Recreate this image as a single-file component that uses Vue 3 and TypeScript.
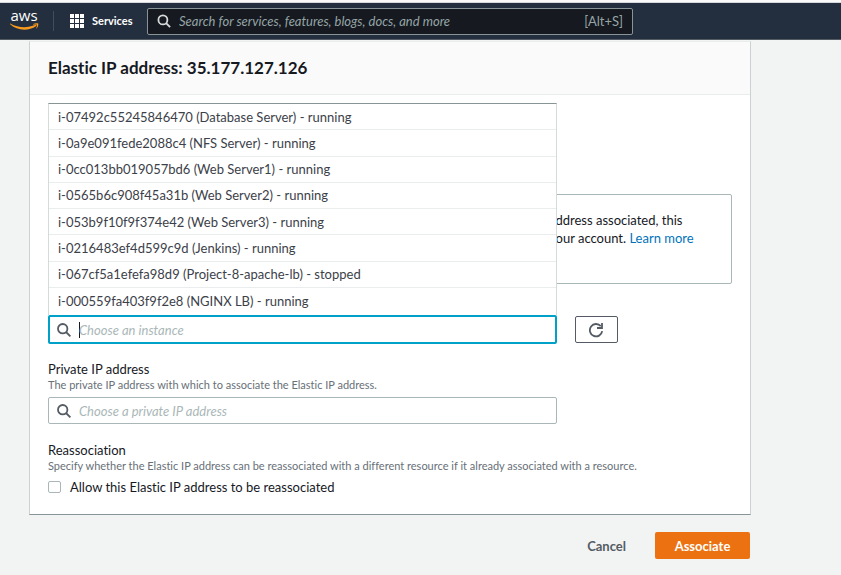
<script setup lang="ts">
import { ref } from 'vue'

interface Instance {
  id: string
  name: string
  state: 'running' | 'stopped'
}

const address = '35.177.127.126'

const instances: Instance[] = [
  { id: 'i-07492c55245846470', name: 'Database Server', state: 'running' },
  { id: 'i-0a9e091fede2088c4', name: 'NFS Server', state: 'running' },
  { id: 'i-0cc013bb019057bd6', name: 'Web Server1', state: 'running' },
  { id: 'i-0565b6c908f45a31b', name: 'Web Server2', state: 'running' },
  { id: 'i-053b9f10f9f374e42', name: 'Web Server3', state: 'running' },
  { id: 'i-0216483ef4d599c9d', name: 'Jenkins', state: 'running' },
  { id: 'i-067cf5a1efefa98d9', name: 'Project-8-apache-lb', state: 'stopped' },
  { id: 'i-000559fa403f9f2e8', name: 'NGINX LB', state: 'running' },
]

const search = ref('')
const instance = ref('')
const privateIp = ref('')
const allowReassociation = ref(false)

function choose(item: Instance) {
  instance.value = item.id
}
</script>

<template>
  <div class="page">
    <header class="nav">
      <a class="logo" href="#">
        <svg viewBox="0 -4 30 30" width="30" height="30" aria-hidden="true">
          <text x="14" y="11" text-anchor="middle" class="logo-text">aws</text>
          <path d="M.3 13.5c8 4.6 17 5 25.2 1.3.9-.3 1.4.5.7 1.1C18.5 21.3 7.5 21 .1 14.2c-.3-.4-.1-.8.2-.7z" fill="#f79a1e" />
          <path d="M23.2 14.1c1.7-1.1 4.6-1.1 5-.5.4.6-.1 3.5-1.6 4.9-.3.2-.5.1-.4-.2.5-1.2 1-2.9.7-3.4-.4-.5-2.3-.3-3.5-.2-.3 0-.4-.3-.2-.6z" fill="#f79a1e" />
        </svg>
      </a>
      <button class="services" type="button">
        <svg viewBox="0 0 14 14" width="14" height="14" fill="currentColor" aria-hidden="true">
          <path d="M0 0h4v4H0zM5 0h4v4H5zM10 0h4v4h-4zM0 5h4v4H0zM5 5h4v4H5zM10 5h4v4h-4zM0 10h4v4H0zM5 10h4v4H5zM10 10h4v4h-4z" />
        </svg>
        Services
      </button>
      <label class="nav-search">
        <svg viewBox="0 0 14 14" width="14" height="14" fill="none" stroke="currentColor" stroke-width="1.8" aria-hidden="true">
          <circle cx="5.9" cy="5.9" r="4.5" />
          <path d="M9.1 9.1 13.1 13.1" />
        </svg>
        <input v-model="search" type="text" placeholder="Search for services, features, blogs, docs, and more" />
        <span class="shortcut">[Alt+S]</span>
      </label>
    </header>

    <main class="content">
      <section class="card">
        <h2 class="card-title">Elastic IP address: {{ address }}</h2>
        <div class="card-body">
          <div class="alert">
            <p>
              address associated, this<br />
              your account. <a href="#">Learn more</a>
            </p>
          </div>

          <div class="field-row">
            <div class="combobox">
              <ul class="options">
                <li v-for="item in instances" :key="item.id">
                  <button type="button" @click="choose(item)">
                    {{ item.id }} ({{ item.name }}) - {{ item.state }}
                  </button>
                </li>
              </ul>
              <label class="search-box focused">
                <svg viewBox="0 0 14 14" width="14" height="14" fill="none" stroke="currentColor" stroke-width="1.8" aria-hidden="true">
                  <circle cx="5.7" cy="5.7" r="4.7" />
                  <path d="M9 9 13.4 13.4" />
                </svg>
                <span class="caret"></span>
                <input v-model="instance" type="text" placeholder="Choose an instance" />
              </label>
            </div>
            <button class="refresh" type="button">
              <svg viewBox="0 0 16 16" width="16" height="16" fill="none" stroke="currentColor" stroke-width="1.8" aria-hidden="true">
                <path d="M14.2 9.2A6.2 6.2 0 1 1 12.8 4.2" />
                <path d="M14 1v5H9" />
              </svg>
            </button>
          </div>

          <div class="field">
            <label class="label" for="private-ip">Private IP address</label>
            <p class="hint">The private IP address with which to associate the Elastic IP address.</p>
            <div class="field-row">
              <div class="search-box">
                <svg viewBox="0 0 14 14" width="14" height="14" fill="none" stroke="currentColor" stroke-width="1.8" aria-hidden="true">
                  <circle cx="5.7" cy="5.7" r="4.7" />
                  <path d="M9 9 13.4 13.4" />
                </svg>
                <input id="private-ip" v-model="privateIp" type="text" placeholder="Choose a private IP address" />
              </div>
            </div>
          </div>

          <div class="field">
            <h3 class="label">Reassociation</h3>
            <p class="hint">
              Specify whether the Elastic IP address can be reassociated with a different resource if it already associated with a resource.
            </p>
            <label class="check">
              <input v-model="allowReassociation" type="checkbox" />
              Allow this Elastic IP address to be reassociated
            </label>
          </div>
        </div>
      </section>

      <div class="actions">
        <button class="cancel" type="button">Cancel</button>
        <button class="primary" type="button">Associate</button>
      </div>
    </main>
  </div>
</template>

<style>
body {
  background: #f2f3f3;
}
</style>

<style scoped>
.page {
  font-family: Lato, "Noto Sans", sans-serif;
  font-size: 13px;
  line-height: 18px;
  font-variant-ligatures: none;
  color: #16191f;
  border-top: 2px solid #fafafa;
}

.page *,
.page *::before {
  box-sizing: border-box;
}

h2, h3, p, ul {
  margin: 0;
  padding: 0;
}

button,
input {
  margin: 0;
  padding: 0;
  border: 0;
  background: none;
  color: inherit;
  font: inherit;
  font-variant-ligatures: none;
}

button {
  cursor: pointer;
}

svg {
  display: block;
  flex: none;
}

.nav {
  display: flex;
  align-items: center;
  height: 38px;
  padding-left: 10px;
  background: #232f3e;
  border-top: 1px solid #d5d7da;
  border-bottom: 1px solid #545b64;
}

.logo {
  display: flex;
  align-items: center;
  height: 20px;
  padding-right: 13px;
  border-right: 1px solid #414d5c;
}

.logo-text {
  font-family: "Open Sans", sans-serif;
  font-size: 15px;
  font-weight: 500;
  fill: #fff;
}

.services {
  display: flex;
  align-items: center;
  gap: 8px;
  width: 93px;
  padding-left: 16px;
  color: #fff;
  font-size: 11px;
  font-weight: bold;
}

.nav-search {
  display: flex;
  align-items: center;
  gap: 8px;
  width: 70%;
  max-width: 486px;
  height: 27px;
  padding: 0 9px;
  background: #161920;
  border: 1px solid #879596;
  border-radius: 2px;
  color: #d5dbdb;
}

.nav-search input {
  flex: 1;
  min-width: 0;
  outline: 0;
}

.nav-search input::placeholder {
  color: #95a5a6;
  opacity: 1;
  font-style: italic;
}

.shortcut {
  color: #95a5a6;
}

.content {
  padding: 1px 90px 16px 29px;
}

.card {
  background: #fff;
  border: 1px solid #ccd1d1;
  border-top-color: #eaeded;
  border-bottom-color: #879596;
}

.card-title {
  padding: 14px 18px;
  background: #fafafa;
  border-bottom: 1px solid #eaeded;
  font-size: 17px;
  line-height: 24px;
}

.card-body {
  padding: 99px 18px 18px;
}

.alert {
  display: flex;
  justify-content: flex-end;
  height: 90px;
  padding: 16px 32px 16px 0;
  border: 1px solid #aab7b8;
  border-radius: 2px;
}

.alert p {
  width: 150px;
}

a {
  color: #0073bb;
  text-decoration: none;
}

.field-row {
  display: grid;
  grid-template-columns: 1fr 43px;
  gap: 18px;
  width: 83.3333%;
}

.alert + .field-row {
  margin-top: 31px;
}

.combobox {
  position: relative;
}

.options {
  position: absolute;
  z-index: 1;
  right: 0;
  bottom: 100%;
  left: 0;
  display: grid;
  grid-auto-rows: 1fr;
  height: 212px;
  padding-bottom: 1px;
  list-style: none;
  background: #fff;
  border: 1px solid #d5dbdb;
  border-top-color: #879596;
  border-bottom: 0;
}

.options li {
  border-bottom: 1px solid #eaeded;
}

.options li:last-child {
  border-bottom: 0;
}

.options button {
  display: block;
  width: 100%;
  height: 100%;
  padding: 0 9px;
  color: #3c4149;
  text-align: left;
}

.search-box {
  display: flex;
  align-items: center;
  gap: 8px;
  height: 27px;
  padding-left: 8px;
  border: 1px solid #aab7b8;
  border-radius: 2px;
  background: #fff;
  color: #545b64;
}

.search-box.focused {
  height: 29px;
  padding-left: 7px;
  border: 2px solid #00a1c9;
}

.search-box input {
  flex: 1;
  min-width: 0;
  outline: 0;
}

.search-box.focused input {
  margin-left: -9px;
}

.search-box input::placeholder {
  color: #aab7b8;
  opacity: 1;
  font-style: italic;
}

.caret {
  width: 1px;
  height: 16px;
  background: #16191f;
}

.refresh {
  display: flex;
  align-items: center;
  justify-content: center;
  align-self: center;
  height: 27px;
  border: 1px solid #545b64;
  border-radius: 2px;
  color: #545b64;
}

.field {
  margin-top: 16px;
}

.field + .field {
  margin-top: 17px;
}

.label {
  display: block;
  font-size: 13px;
  font-weight: normal;
}

.hint {
  margin-bottom: 5px;
  color: #687078;
  font-size: 11px;
  line-height: 14px;
}

.check {
  display: flex;
  align-items: center;
  gap: 9px;
}

.check input {
  appearance: none;
  width: 13px;
  height: 12px;
  border: 1px solid #aab7b8;
  border-radius: 2px;
  background: #fff;
}

.check input:checked {
  background: #0073bb;
}

.actions {
  display: flex;
  justify-content: flex-end;
  gap: 11px;
  margin-top: 17px;
  padding-right: 1px;
  font-weight: bold;
}

.cancel {
  padding: 0 18px;
  color: #545b64;
}

.primary {
  min-width: 95px;
  height: 27px;
  padding: 0 18px;
  background: #ec7211;
  border-radius: 2px;
  color: #fff;
}
</style>
